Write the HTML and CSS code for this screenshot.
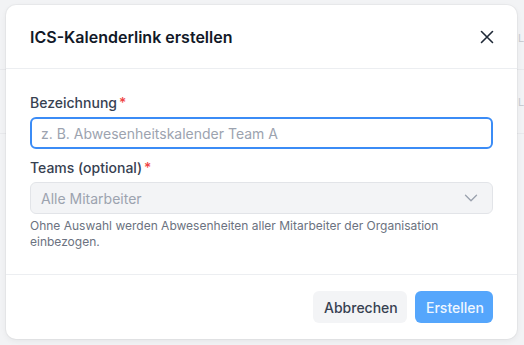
FILE: index.html
```html
<!DOCTYPE html>
<html lang="de">
<head>
<meta charset="utf-8">
<title>ICS-Kalenderlink erstellen</title>
<link rel="stylesheet" href="styles.css">
</head>
<body>
<div class="backdrop">
  <div class="bg-row"><span class="bg-letter">L</span></div>
  <div class="bg-row"><span class="bg-letter">L</span></div>
</div>
<div class="overlay">
  <div class="modal" role="dialog">
    <div class="modal-header">
      <h2 class="modal-title">ICS-Kalenderlink erstellen</h2>
      <button class="close-btn" aria-label="Schließen">
        <svg width="16" height="16" viewBox="0 0 16 16" fill="none" stroke="#1f2937" stroke-width="1.6" stroke-linecap="round"><path d="M2.5 2.5l11 11M13.5 2.5l-11 11"/></svg>
      </button>
    </div>
    <div class="modal-body">
      <div class="field">
        <label class="label">Bezeichnung<span class="req">*</span></label>
        <div class="input focused"><span class="placeholder">z. B. Abwesenheitskalender Team A</span></div>
      </div>
      <div class="field">
        <label class="label">Teams (optional)<span class="req">*</span></label>
        <div class="select">
          <span class="placeholder">Alle Mitarbeiter</span>
          <svg width="14" height="8" viewBox="0 0 14 8" fill="none" stroke="#9ca3af" stroke-width="1.4" stroke-linecap="round" stroke-linejoin="round"><path d="M1.5 1.2l5.5 5.5 5.5-5.5"/></svg>
        </div>
        <p class="help">Ohne Auswahl werden Abwesenheiten aller Mitarbeiter der Organisation einbezogen.</p>
      </div>
    </div>
    <div class="modal-footer">
      <button class="btn btn-secondary">Abbrechen</button>
      <button class="btn btn-primary">Erstellen</button>
    </div>
  </div>
</div>
</body>
</html>
```

FILE: styles.css
```css
* { box-sizing: border-box; }
html, body { margin: 0; padding: 0; }
body {
  width: 524px;
  height: 345px;
  background: #f2f3f5;
  font-family: Inter, "Noto Sans", sans-serif;
  position: relative;
  overflow: hidden;
}
.backdrop {
  position: absolute;
  inset: 0;
  padding-top: 6px;
}
.bg-row {
  height: 64px;
  border-bottom: 1px solid #e8e9ec;
  display: flex;
  justify-content: flex-end;
  align-items: center;
  padding-right: 0;
}
.bg-letter {
  color: #c9ccd1;
  font-size: 11px;
  line-height: 12px;
  width: 6px;
  overflow: hidden;
}
.overlay {
  position: absolute;
  inset: 0;
  padding: 5px 7px 0 6px;
}
.modal {
  width: 511px;
  background: #fff;
  border-radius: 10px;
  box-shadow: 0 0 0 1px rgba(0,0,0,0.03), 0 2px 6px rgba(0,0,0,0.06);
  overflow: hidden;
}
.modal-header {
  height: 64px;
  display: flex;
  align-items: center;
  justify-content: space-between;
  padding: 0 24px 0 24px;
  border-bottom: 1px solid #eceef1;
}
.modal-title {
  margin: 0;
  font-size: 16px;
  font-weight: 600;
  color: #111827;
}
.close-btn {
  border: 0;
  background: none;
  padding: 0;
  width: 16px;
  height: 16px;
  display: flex;
  align-items: center;
  justify-content: center;
  margin-right: -2px;
}
.modal-body {
  padding: 24px 24px 24px;
}
.field + .field { margin-top: 9px; }
.label {
  display: block;
  font-size: 14px;
  line-height: 20px;
  font-weight: 500;
  color: #374151;
  margin-bottom: 4px;
}
.req {
  color: #ef4444;
  margin-left: 2px;
}
.input, .select {
  height: 32px;
  border-radius: 6px;
  display: flex;
  align-items: center;
  font-size: 14px;
}
.input.focused {
  border: 2px solid #3b8cf6;
  padding: 0 10px 0 9px;
  height: 32px;
}
.placeholder { color: #9ca3af; }
.select {
  background: #f3f4f6;
  border: 1px solid #e2e4e8;
  padding: 0 14px 0 10px;
  justify-content: space-between;
}
.help {
  margin: 4px 0 0;
  font-size: 12px;
  line-height: 16px;
  color: #6b7280;
}
.modal-footer {
  border-top: 1px solid #eceef1;
  padding: 16px 24px 16px;
  display: flex;
  justify-content: flex-end;
  gap: 8px;
}
.btn {
  height: 32px;
  border: 0;
  border-radius: 6px;
  font-family: inherit;
  font-size: 14px;
  font-weight: 500;
  padding: 0 11px;
}
.btn-secondary {
  background: #f3f4f6;
  color: #374151;
  width: 94px;
}
.btn-primary {
  background: #55a6fc;
  color: #eef6ff;
  width: 78px;
}
```
